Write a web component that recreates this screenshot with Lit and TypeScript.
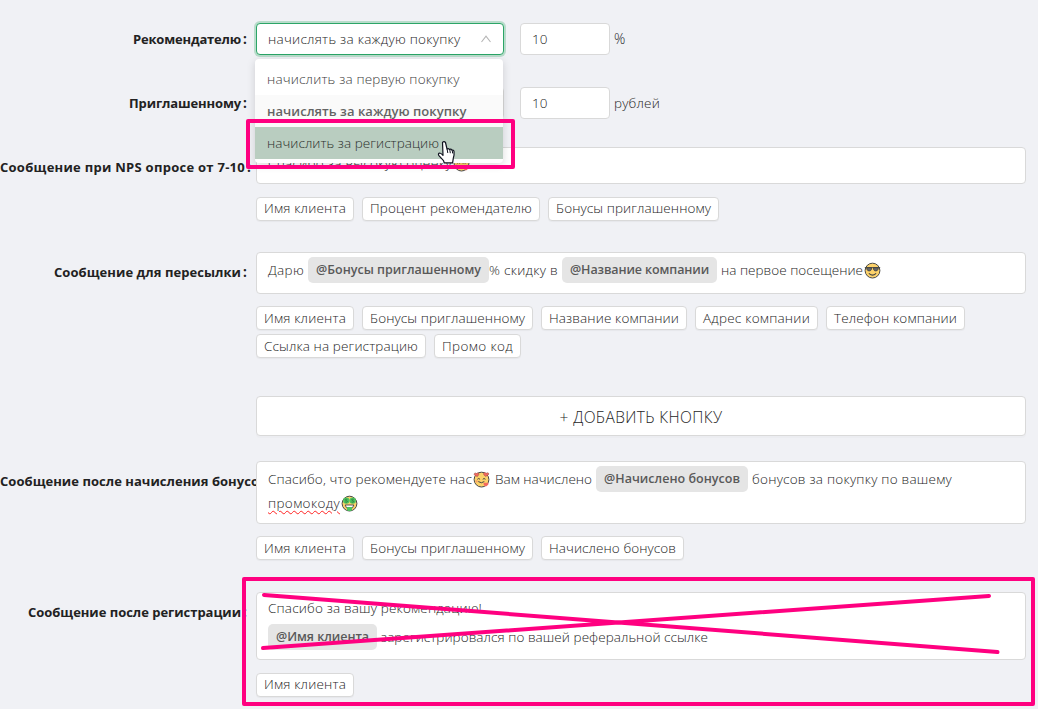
import { LitElement, html, svg, css, nothing } from "lit";
import { customElement, property } from "lit/decorators.js";
import { styleMap } from "lit/directives/style-map.js";

const FACE = '"Open Sans"';
const pen = document.createElement("canvas").getContext("2d")!;

/* Tracking that makes a line of text span the given width. */
function tracking(text: string, width: number, weight: number, size: number) {
  pen.font = `${weight} ${size}px ${FACE}`;
  return (width - pen.measureText(text).width) / text.length;
}

const fitted = (text: string, width: number, weight = 300, size = 13.5) => html`<span
  style=${styleMap({
    display: "inline-block",
    whiteSpace: "pre",
    width: `${width}px`,
    fontWeight: String(weight),
    fontSize: `${size}px`,
    letterSpacing: `${tracking(text, width, weight, size).toFixed(3)}px`,
  })}>${text}</span>`;

type Kind = "cool" | "love" | "money";

@customElement("emoji-face")
class EmojiFace extends LitElement {
  @property() kind: Kind = "cool";

  static styles = css`
    :host { display: inline-flex; width: 17px; height: 17px; flex: none; }
    svg { display: block; }
  `;

  private features() {
    if (this.kind === "cool") {
      return svg`
        <path d="M.8 5.6H16.2M2.6 5.6h5.1l-.4 2.1q-.5 1.2-2 1.2-1.7 0-2.2-1.2zM9.3 5.6h5.1l-.5 2.1q-.5 1.2-2.2 1.2-1.5 0-2-1.2z"
          fill="#666" stroke="#444" stroke-width=".9" />
        <path d="M5.2 11.6q3.3 3 6.6 0" fill="none" stroke="#444" stroke-width="1.1" stroke-linecap="round" />`;
    }
    if (this.kind === "love") {
      return svg`
        <path d="M4.6 8q1-1.3 2.2 0M10 8q1-1.3 2.2 0M5.6 10.8q2.9 2.2 5.4 0" fill="none" stroke="#444" stroke-width="1" stroke-linecap="round" />
        <path d="M4.4 5.6C1.6 4.6.6 3.6 1.4 2.4q.9-1 2.1.1 1-1.3 2.2-.2.8 1.2-1.3 3.3z" fill="#f2695f" stroke="#8c4a44" stroke-width=".5" />
        <path d="M12.6 5.4C10.4 4 10 2.4 11.2 1.6q1.2-.5 1.9.7 1.4-1.2 2.6 0 .8 1.7-3.1 3.1z" fill="#f2695f" stroke="#8c4a44" stroke-width=".5" />
        <path d="M13 15.6q-3.4-2.2-2.2-3.7 1.2-1 2.2.3 1.2-1.3 2.3-.1.9 1.7-2.3 3.5z" fill="#f2695f" />
        <circle cx="3.6" cy="10.4" r="1.1" fill="#f39a6b" />`;
    }
    return svg`
      <circle cx="5.3" cy="5.6" r="3.2" fill="#4cc45f" /><circle cx="11.7" cy="5.6" r="3.2" fill="#4cc45f" />
      <path d="M6.3 4.4q-2-.8-2 .3 0 .8 1 .9 1.2.2 1.1 1.1-.4 1-2.2.2M12.7 4.4q-2-.8-2 .3 0 .8 1 .9 1.2.2 1.1 1.1-.4 1-2.2.2"
        fill="none" stroke="#2c6b38" stroke-width=".7" />
      <path d="M4.2 10h8.6q-.4 3.7-4.3 3.7T4.2 10z" fill="#fff" stroke="#444" stroke-width=".9" />
      <path d="M6 12h5v3.2q-2.5 1.8-5 0z" fill="#4cc45f" />`;
  }

  render() {
    return html`<svg width="17" height="17" viewBox="0 0 17 17">
      <circle cx="8.5" cy="8.6" r="7.4" fill="#fcd26a" stroke="#4a4a48" stroke-width="1" />
      ${this.features()}
    </svg>`;
  }
}

type Seg = { t?: string; w?: number; token?: boolean; emoji?: Kind; gap?: number; wavy?: boolean };
type Line = { h: number; segs: Seg[] };
type Chip = [string, number];
type Message = { label: string; labelW: number; cls: string; lines: Line[]; chips: Chip[]; button?: boolean; cut?: boolean };

const NAME: Chip = ["Имя клиента", 98];
const BONUS: Chip = ["Бонусы приглашенному", 171];

const MESSAGES: Message[] = [
  {
    label: "Сообщение при NPS опросе от 7-10", labelW: 245, cls: "nps",
    lines: [{ h: 24, segs: [{ t: "Спасибо за высокую оценку", w: 184 }, { emoji: "love", gap: 1 }] }],
    chips: [NAME, ["Процент рекомендателю", 178], BONUS],
  },
  {
    label: "Сообщение для пересылки", labelW: 187, cls: "forward", button: true,
    lines: [{ h: 24, segs: [
      { t: "Дарю", w: 36 }, { t: "@Бонусы приглашенному", w: 165, token: true, gap: 4 },
      { t: "% скидку в", w: 69 }, { t: "@Название компании", w: 139, token: true, gap: 4 },
      { t: "на первое посещение", w: 142, gap: 4 }, { emoji: "cool", gap: 1 },
    ] }],
    chips: [NAME, BONUS, ["Название компании", 146], ["Адрес компании", 123], ["Телефон компании", 139],
      ["Ссылка на регистрацию", 170], ["Промо код", 87]],
  },
  {
    label: "Сообщение после начисления бонусо", labelW: 259, cls: "accrual", cut: true,
    lines: [
      { h: 24, segs: [
        { t: "Спасибо, что рекомендуете нас", w: 204 }, { emoji: "love", gap: .5 },
        { t: "Вам начислено", w: 97, gap: 5.5 }, { t: "@Начислено бонусов", w: 136, token: true, gap: 4 },
        { t: "бонусов за покупку по вашему", w: 200, gap: 4 },
      ] },
      { h: 24, segs: [{ t: "промокоду", w: 72, wavy: true }, { emoji: "money", gap: 1 }] },
    ],
    chips: [NAME, BONUS, ["Начислено бонусов", 143]],
  },
  {
    label: "Сообщение после регистрации", labelW: 213, cls: "signup",
    lines: [
      { h: 22, segs: [{ t: "Спасибо за вашу рекомендацию!", w: 214 }] },
      { h: 35, segs: [{ t: "@Имя клиента", w: 93, token: true },
        { t: "зарегистрировался по вашей реферальной ссылке", w: 327, gap: 4 }] },
    ],
    chips: [NAME],
  },
];

@customElement("app-root")
class AppRoot extends LitElement {
  static styles = css`
    :host {
      display: block; position: relative; overflow: hidden; box-sizing: border-box;
      width: 1038px; height: 709px; padding-top: 19px; background: #f0f1f5;
      font: 300 13.5px/24px "Open Sans", sans-serif; color: #262626;
    }
    * { box-sizing: border-box; }
    .row { display: grid; grid-template-columns: 256px 770px; align-items: start; }
    .row + .row { margin-top: 24px; }
    .label {
      display: flex; justify-content: flex-end; width: max-content; min-width: 248px;
      height: 40px; line-height: 40px; color: #222; font-weight: 700; white-space: nowrap;
    }
    .colon { width: 7px; padding-left: 2px; }
    .controls { display: flex; align-items: center; height: 40px; }
    .field {
      position: relative; height: 32px; display: flex; align-items: center; padding: 0 11px;
      background: #fff; border: 1px solid #d9d9d9; border-radius: 4px;
    }
    .select { width: 248px; justify-content: space-between; margin-right: 16px; }
    .select.open { border-color: #2ba567; box-shadow: 0 0 0 2px #b9dccb; z-index: 2; }
    .num { width: 90px; margin-right: 4px; }
    .menu {
      position: absolute; left: -2px; top: 35px; z-index: 3; width: 248px; padding: 4px 0;
      background: #fff; border-radius: 4px; box-shadow: 0 2px 8px rgba(0, 0, 0, .15); color: #3c3c3c;
    }
    .option { height: 32px; line-height: 32px; padding-left: 12px; }
    .option.selected { background: #fafafa; color: #646464; }
    .option.hover { background: #b9cdc0; color: #2a302c; }
    .row.forward { margin-top: 31px; }
    .row.accrual { margin-top: 25px; }
    .row.signup { margin-top: 32px; }
    .box {
      position: relative; padding: 5px 11px; background: #fff;
      border: 1px solid #d9d9d9; border-radius: 4px;
    }
    .nps .box { height: 37px; padding-top: 3px; }
    .forward .box { height: 42px; }
    .accrual .box { height: 63px; }
    .signup .box { height: 68px; padding-top: 4px; }
    .line { display: flex; align-items: center; white-space: nowrap; }
    .seg { display: inline-flex; align-items: center; }
    .token { height: 26px; padding: 0 8px; border-radius: 5px; background: #e5e5e5; color: #595959; }
    .wavy { text-decoration: underline wavy #f22 1.3px; text-underline-offset: 2px; }
    .chips { display: flex; flex-wrap: wrap; gap: 4px 8px; margin-top: 12px; }
    .nps .chips, .signup .chips { margin-top: 13px; }
    .chip {
      height: 24px; padding: 0 7px; line-height: 22px; background: #fff; border: 1px solid #d9d9d9;
      border-radius: 4px; white-space: nowrap; box-shadow: 0 1px 1px rgba(0, 0, 0, .04);
    }
    .nps .chip, .signup .chip { line-height: 20px; }
    .add {
      display: flex; justify-content: center; align-items: center; height: 40px; margin-top: 38px; padding-top: 1px;
      background: #fff; border: 1px solid #d9d9d9; border-radius: 4px; box-shadow: 0 2px 0 rgba(0, 0, 0, .015);
    }
    .marks { position: absolute; inset: 0; z-index: 5; pointer-events: none; }
  `;

  private label(text: string, width: number, cut = false) {
    return html`<div class="label">${fitted(text, width, 700, 13)}${cut ? nothing : html`<span class="colon">:</span>`}</div>`;
  }

  private seg(s: Seg) {
    const gap = styleMap({ marginLeft: `${s.gap ?? 0}px` });
    if (s.emoji) return html`<emoji-face kind=${s.emoji} style=${gap}></emoji-face>`;
    return html`<span class="seg ${s.token ? "token" : ""} ${s.wavy ? "wavy" : ""}" style=${gap}
      >${s.token ? fitted(s.t!, s.w!, 600, 12.5) : fitted(s.t!, s.w!)}</span>`;
  }

  private message(m: Message) {
    return html`<div class="row ${m.cls}">
      ${this.label(m.label, m.labelW, m.cut)}
      <div>
        <div class="box">${m.lines.map((l) => html`<div class="line" style=${styleMap({ height: `${l.h}px` })}>${l.segs.map((s) => this.seg(s))}</div>`)}</div>
        <div class="chips">${m.chips.map(([t, w]) => html`<div class="chip">${fitted(t, w - 16)}</div>`)}</div>
        ${m.button ? html`<div class="add">${fitted("+ ДОБАВИТЬ КНОПКУ", 163, 300, 15.5)}</div>` : nothing}
      </div>
    </div>`;
  }

  render() {
    return html`
      <div class="row">
        ${this.label("Рекомендателю", 108)}
        <div class="controls">
          <div class="field select open">
            ${fitted("начислять за каждую покупку", 192.5)}
            <svg width="12" height="12" viewBox="0 0 12 12"><path d="M1.5 9 6 3.2 10.5 9" fill="none" stroke="#b5b5b5" stroke-width="1.1" /></svg>
            <div class="menu">
              <div class="option">${fitted("начислить за первую покупку", 192.5)}</div>
              <div class="option selected">${fitted("начислять за каждую покупку", 199.5, 600, 13)}</div>
              <div class="option hover">${fitted("начислить за регистрацию", 172)}</div>
            </div>
          </div>
          <div class="field num">${fitted("10", 15.5)}</div>${fitted("%", 12, 300, 14)}
        </div>
      </div>
      <div class="row">
        ${this.label("Приглашенному", 112)}
        <div class="controls">
          <div class="field select"></div>
          <div class="field num">${fitted("10", 15.5)}</div>${fitted("рублей", 46)}
        </div>
      </div>
      ${MESSAGES.map((m) => this.message(m))}
      <svg class="marks" width="1038" height="709" viewBox="0 0 1038 709">
        <g fill="none" stroke="#ff0080" stroke-width="4">
          <rect x="248" y="121" width="265" height="46" stroke-linejoin="round" />
          <rect x="244" y="579" width="789" height="125" stroke-linejoin="round" />
          <path d="M264 595 997.5 652M263 648 989 596" stroke-linecap="round" />
        </g>
        <path d="M443.5 142.5q1.5-1.5 3 .2l1.5 6.5q1.2-1 2.5.4 1.5-.8 2.4.7 1.7-.5 2.1 1.2.5 4-.8 7.5l-.6 4h-8.4l-.7-2.2-4.800-5.300q-.8-2 1-2.300 1.300 0 3.300 2.300z"
          transform="translate(-1 -.2)" fill="#fff" stroke="#10131f" stroke-width="1.2" stroke-linejoin="round" />
        <path d="m447.1 149 .7 4m2-3.5.5 3.7m2-3 .3 3.2" stroke="#10131f" stroke-width="1" fill="none" />
      </svg>
    `;
  }
}
